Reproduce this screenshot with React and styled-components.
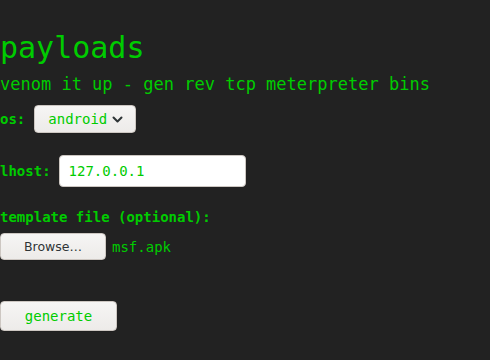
import styled, { createGlobalStyle } from "styled-components";

const GlobalStyle = createGlobalStyle`
    html, body {
        margin: 0;
        padding: 0;
        background: #222222;
    }
    body {
        font-family: "DejaVu Sans Mono", monospace;
        color: #00cc00;
    }
`;

const Page = styled.div`
    display: flex;
    flex-direction: column;
    padding-top: 30px;
    min-height: 330px;
`;

const Title = styled.h1`
    margin: 0;
    font-size: 30px;
    font-weight: normal;
    line-height: 35px;
`;

const Subtitle = styled.h3`
    margin: 9px 0 0;
    font-size: 17px;
    font-weight: normal;
    line-height: 20px;
    white-space: nowrap;
`;

const Form = styled.form`
    display: flex;
    flex-direction: column;
    align-items: flex-start;
    margin-top: 11px;
`;

const Row = styled.div`
    display: flex;
    align-items: center;
    margin-top: ${({ gap }) => gap || 0}px;
`;

const Label = styled.label`
    font-size: 14px;
    font-weight: bold;
    line-height: 16px;
    margin-right: ${({ space }) => space || 0}px;
    margin-top: ${({ gap }) => gap || 0}px;
`;

const buttonLook = `
    box-sizing: border-box;
    border: 1px solid #cdc7c2;
    border-radius: 4px;
    background: linear-gradient(#f6f5f4, #edebe9);
    box-shadow: 0 1px 0 rgba(0, 0, 0, 0.07);
`;

const SelectBox = styled.div`
    ${buttonLook}
    display: flex;
    align-items: center;
    width: 102px;
    height: 28px;
    padding: 0 12px 0 13px;
    font-size: 14px;
    color: #00cc00;
    cursor: pointer;

    svg {
        margin-left: auto;
    }
`;

const TextInput = styled.input`
    box-sizing: border-box;
    width: 187px;
    height: 32px;
    padding: 0 9px;
    border: 1px solid #cdc7c2;
    border-radius: 4px;
    background: #ffffff;
    font-family: "DejaVu Sans Mono", monospace;
    font-size: 14px;
    color: #00cc00;
    outline: none;
`;

const BrowseButton = styled.button`
    ${buttonLook}
    width: 106px;
    height: 27px;
    padding: 0;
    font-family: "DejaVu Sans", sans-serif;
    font-size: 12.5px;
    color: #2e3436;
    margin-right: 6px;
`;

const FileName = styled.span`
    font-size: 14px;
`;

const GenerateButton = styled.button`
    ${buttonLook}
    margin-top: 41px;
    width: 117px;
    height: 30px;
    padding: 0;
    font-family: "DejaVu Sans Mono", monospace;
    font-size: 14px;
    color: #00cc00;
`;

const Chevron = () => (
    <svg width="11" height="7" viewBox="0 0 11 7">
        <path d="M1.5 1.5 L5.5 5.5 L9.5 1.5" fill="none" stroke="#2e3436" strokeWidth="2" strokeLinecap="round" strokeLinejoin="round" />
    </svg>
);

const App = () => {
    return (
        <Page>
            <GlobalStyle />
            <Title>payloads</Title>
            <Subtitle>venom it up - gen rev tcp meterpreter bins</Subtitle>
            <Form onSubmit={(e) => e.preventDefault()}>
                <Row>
                    <Label space={9}>os:</Label>
                    <SelectBox>
                        android
                        <Chevron />
                    </SelectBox>
                </Row>
                <Row gap={22}>
                    <Label space={8}>lhost:</Label>
                    <TextInput defaultValue="127.0.0.1" />
                </Row>
                <Label gap={22}>template file (optional):</Label>
                <Row gap={8}>
                    <BrowseButton type="button">Browse…</BrowseButton>
                    <FileName>msf.apk</FileName>
                </Row>
                <GenerateButton type="submit">generate</GenerateButton>
            </Form>
        </Page>
    );
};

export default App;
